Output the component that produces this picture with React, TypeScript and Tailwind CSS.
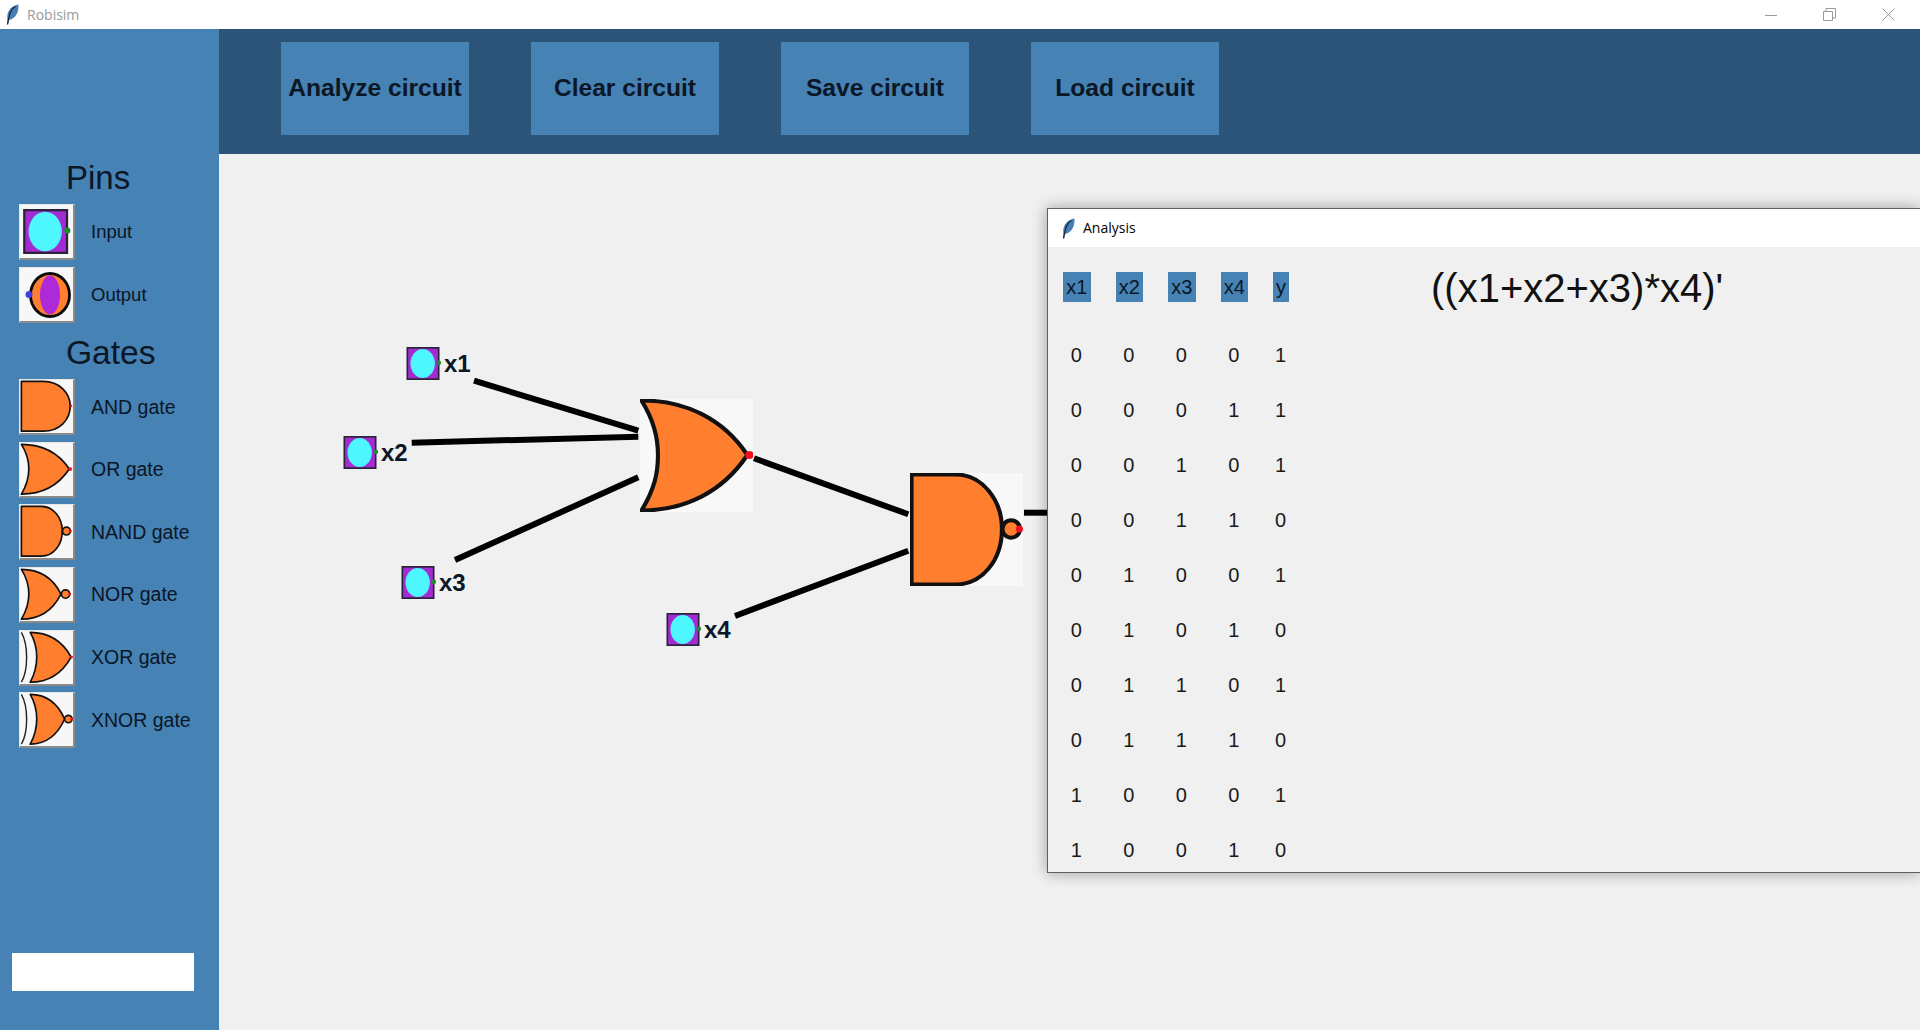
import React from "react";

const rows = [
  [0, 0, 0, 0, 1],
  [0, 0, 0, 1, 1],
  [0, 0, 1, 0, 1],
  [0, 0, 1, 1, 0],
  [0, 1, 0, 0, 1],
  [0, 1, 0, 1, 0],
  [0, 1, 1, 0, 1],
  [0, 1, 1, 1, 0],
  [1, 0, 0, 0, 1],
  [1, 0, 0, 1, 0],
];

const ORANGE = "#ff7f2f";
const RED = "#f01020";

const Feather = () => (
  <svg width="13" height="21" viewBox="0 0 13 21" className="shrink-0">
    <path d="M1.5 20.5 L1.2 13 C1.5 6 6 1.5 12.5 0.5 C12.8 7 11 12 6 15 L3 16 Z" fill="#4a7fb5" />
    <path d="M1.5 20.5 L2.8 14.5 C3.5 9 6 4.5 9.5 2.5" fill="none" stroke="#16263a" strokeWidth="1.3" />
  </svg>
);

const PinIcon = ({ size }: { size: number }) => (
  <svg width={size + 3} height={size} viewBox="0 0 106 100" className="shrink-0 overflow-visible">
    <rect x="2.5" y="2.5" width="95" height="95" fill="#a22bd2" stroke="#2a2238" strokeWidth="5" />
    <ellipse cx="49" cy="50" rx="37" ry="44" fill="#4df7fd" />
    <circle cx="98" cy="48" r="7" fill="#1c8a33" />
  </svg>
);

const OutputIcon = () => (
  <svg width="53" height="53" viewBox="0 0 53 53">
    <ellipse cx="30" cy="27" rx="19.5" ry="21.5" fill={ORANGE} stroke="#0a0a0a" strokeWidth="2.8" />
    <ellipse cx="30" cy="27" rx="10" ry="19.5" fill="#ae2ad8" />
    <circle cx="9" cy="26.5" r="3.5" fill="#4040e0" />
  </svg>
);

const or = "M3 3 C45 3 82 20 106 56 C82 92 45 110 3 110 C15 90 19 75 19 56 C19 38 15 22 3 3 Z";
const nor = "M3 3 C40 3 70 20 88 56 C70 92 40 110 3 110 C15 90 19 75 19 56 C19 38 15 22 3 3 Z";
const xor = "M22 3 C60 3 90 20 110 56 C90 92 60 110 22 110 C33 90 36 75 36 56 C36 38 33 22 22 3 Z";
const xnor = "M22 3 C55 3 80 20 96 56 C80 92 55 110 22 110 C33 90 36 75 36 56 C36 38 33 22 22 3 Z";

type GateKind = "and" | "or" | "nand" | "nor" | "xor" | "xnor";

const GateShape = ({ kind, weight = 3.6 }: { kind: GateKind; weight?: number }) => {
  const s = { stroke: "#111", strokeWidth: weight, strokeLinejoin: "round" as const };
  const arc = <path d="M3 3 C18 30 18 84 3 110" fill="none" stroke="#222" strokeWidth="3" />;
  if (kind === "and")
    return (
      <>
        <path d="M3 3 H50 C85 3 108 28 108 56 C108 86 85 110 50 110 H3 Z" fill={ORANGE} {...s} />
        <circle cx="110" cy="56" r="2.5" fill={RED} />
      </>
    );
  if (kind === "or")
    return (
      <>
        <path d={or} fill={ORANGE} {...s} />
        <circle cx="108" cy="56" r="4" fill={RED} />
      </>
    );
  if (kind === "nand")
    return (
      <>
        <path d="M3 3 H46 C72 3 91 28 91 56 C91 86 72 110 46 110 H3 Z" fill={ORANGE} {...s} />
        <circle cx="100" cy="56" r="8.5" fill={ORANGE} {...s} />
        <circle cx="108" cy="56" r="3.5" fill={RED} />
      </>
    );
  if (kind === "nor")
    return (
      <>
        <path d={nor} fill={ORANGE} {...s} />
        <circle cx="98" cy="56" r="9" fill={ORANGE} {...s} />
        <circle cx="107" cy="56" r="3" fill={RED} />
      </>
    );
  if (kind === "xor")
    return (
      <>
        {arc}
        <path d={xor} fill={ORANGE} {...s} />
        <circle cx="111" cy="56" r="3" fill={RED} />
      </>
    );
  return (
    <>
      {arc}
      <path d={xnor} fill={ORANGE} {...s} />
      <circle cx="104" cy="56" r="8" fill={ORANGE} {...s} />
      <circle cx="111" cy="56" r="3" fill={RED} />
    </>
  );
};

const Tool = ({ label, children, small }: { label: string; children: React.ReactNode; small?: boolean }) => (
  <div className="flex h-[56px] items-center mb-[6.6px] pl-[19px]">
    <div className="flex h-[56px] w-[56px] shrink-0 items-center justify-center bg-[#f7f7f8] border-t border-l border-[#e8e8e8] border-r-2 border-b-2 border-r-[#8a8a8a] border-b-[#8a8a8a]">
      {children}
    </div>
    <span className={small ? "ml-[16px] text-[18.5px] text-[#0b1626]" : "ml-[16px] text-[19.5px] text-[#0b1626]"}>{label}</span>
  </div>
);

const GateTool = ({ label, kind }: { label: string; kind: GateKind }) => (
  <Tool label={label}>
    <svg width="53" height="53" viewBox="0 0 114 114">
      <GateShape kind={kind} />
    </svg>
  </Tool>
);

const PinNode = ({ label, className }: { label: string; className: string }) => (
  <div className={"absolute flex items-center " + className}>
    <PinIcon size={33} />
    <span className="ml-[2px] text-[24px] font-bold leading-none text-[#0b1626]">{label}</span>
  </div>
);

const App: React.FC = () => {
  return (
    <div className="flex h-[1030px] w-[1920px] flex-col overflow-hidden font-['Liberation_Sans',Arial,sans-serif] text-black">
      <div className="flex h-[29px] shrink-0 items-center bg-white">
        <div className="ml-[6px]">
          <Feather />
        </div>
        <span className="ml-[8px] -mt-[1px] font-['Open_Sans',sans-serif] text-[14px] text-[#999]">Robisim</span>
        <div className="ml-auto flex items-center">
          <svg width="12" height="12" viewBox="0 0 12 12" className="mr-[46px]">
            <path d="M0 6.5H12" stroke="#999" strokeWidth="1" />
          </svg>
          <svg width="13" height="13" viewBox="0 0 13 13" className="mr-[46px]">
            <path d="M0.5 3.5H9.5V12.5H0.5Z M3 3.5V0.5H12.5V10H9.5" fill="none" stroke="#999" strokeWidth="1" />
          </svg>
          <svg width="13" height="13" viewBox="0 0 13 13" className="mr-[25px]">
            <path d="M0.5 0.5L12.5 12.5M12.5 0.5L0.5 12.5" stroke="#999" strokeWidth="1" />
          </svg>
        </div>
      </div>

      <div className="flex min-h-0 flex-1">
        <aside className="flex w-[219px] shrink-0 flex-col bg-[#4682b4]">
          <div className="mt-[129px] mb-[6px] h-[40px] pl-[66px] text-[33px] leading-[40px] text-[#0b1626]">Pins</div>
          <Tool label="Input" small>
            <PinIcon size={45} />
          </Tool>
          <Tool label="Output" small>
            <OutputIcon />
          </Tool>
          <div className="mt-[4px] mb-[6px] h-[40px] pl-[66px] text-[33.6px] leading-[40px] text-[#0b1626]">Gates</div>
          <GateTool label="AND gate" kind="and" />
          <GateTool label="OR gate" kind="or" />
          <GateTool label="NAND gate" kind="nand" />
          <GateTool label="NOR gate" kind="nor" />
          <GateTool label="XOR gate" kind="xor" />
          <GateTool label="XNOR gate" kind="xnor" />
          <input className="mt-auto mb-[39px] ml-[12px] h-[38px] w-[182px] bg-white outline-none" />
        </aside>

        <main className="flex min-w-0 flex-1 flex-col">
          <div className="flex h-[125px] shrink-0 items-start gap-[62px] bg-[#2c5478] pt-[13px] pl-[62px]">
            {["Analyze circuit", "Clear circuit", "Save circuit", "Load circuit"].map((label) => (
              <button key={label} className="flex h-[93px] w-[188px] items-center justify-center bg-[#4682b4] text-[24.6px] font-bold whitespace-nowrap text-[#0b1626]">
                {label}
              </button>
            ))}
          </div>

          <div className="relative flex-1 overflow-hidden bg-[#f0f0f0]">
            {/* wires */}
            <svg className="absolute inset-0 h-full w-full">
              <g stroke="#000" strokeWidth="6" fill="none">
                <path d="M255 226.7L419.3 276.7" />
                <path d="M192.7 288.7L419.3 282.7" />
                <path d="M236 406L419.3 323.3" />
                <path d="M516 462L689.3 396.7" />
                <path d="M535 304.3L689.3 360.3" />
                <path d="M805 358.7L828 358.7" />
              </g>
            </svg>

            <PinNode label="x1" className="left-[187px] top-[193px]" />
            <PinNode label="x2" className="left-[124px] top-[282px]" />
            <PinNode label="x3" className="left-[182px] top-[412px]" />
            <PinNode label="x4" className="left-[447px] top-[459px]" />

            <div className="absolute left-[421px] top-[245px] h-[113px] w-[113px] bg-[#f8f8f8]">
              <svg width="113" height="113" viewBox="1.5 1.5 110 110">
                <GateShape kind="or" weight={4} />
              </svg>
            </div>
            <div className="absolute left-[691px] top-[319px] h-[113px] w-[113px] bg-[#f8f8f8]">
              <svg width="113" height="113" viewBox="1.5 1.5 110 110">
                <GateShape kind="nand" weight={4} />
              </svg>
            </div>

            {/* analysis window */}
            <div className="absolute top-[54px] right-0 left-[828px] flex h-[665px] flex-col overflow-hidden border-t border-b border-l border-[#5f5f5f] bg-[#f0f0f0] shadow-[0_0_14px_rgba(0,0,0,0.35)]">
              <div className="flex h-[38px] shrink-0 items-center bg-white pl-[14px]">
                <Feather />
                <span className="ml-[8px] -mt-[2px] font-['Open_Sans',sans-serif] text-[14px] text-black">Analysis</span>
              </div>
              <div className="flex items-start pt-[25px] pl-[15px]">
                <div className="grid grid-cols-[27.5px_27.5px_27.5px_27.5px_16px] gap-x-[25px] text-[20px] text-[#1a1a1a]">
                  {["x1", "x2", "x3", "x4", "y"].map((h) => (
                    <div key={h} className="mb-[25.5px] h-[30px] bg-[#4682b4] text-center leading-[30px] text-[#0b1626]">
                      {h}
                    </div>
                  ))}
                  {rows.map((row, r) =>
                    row.map((v, c) => (
                      <div key={r + "-" + c} className="h-[55px] pr-[1px] text-center leading-[55px]">
                        {v}
                      </div>
                    ))
                  )}
                </div>
                <div className="ml-[142px] mt-[1px] h-[30px] text-[40px] leading-[30px] whitespace-nowrap text-[#111]">((x1+x2+x3)*x4)'</div>
              </div>
            </div>
          </div>
        </main>
      </div>
    </div>
  );
};

export default App;
